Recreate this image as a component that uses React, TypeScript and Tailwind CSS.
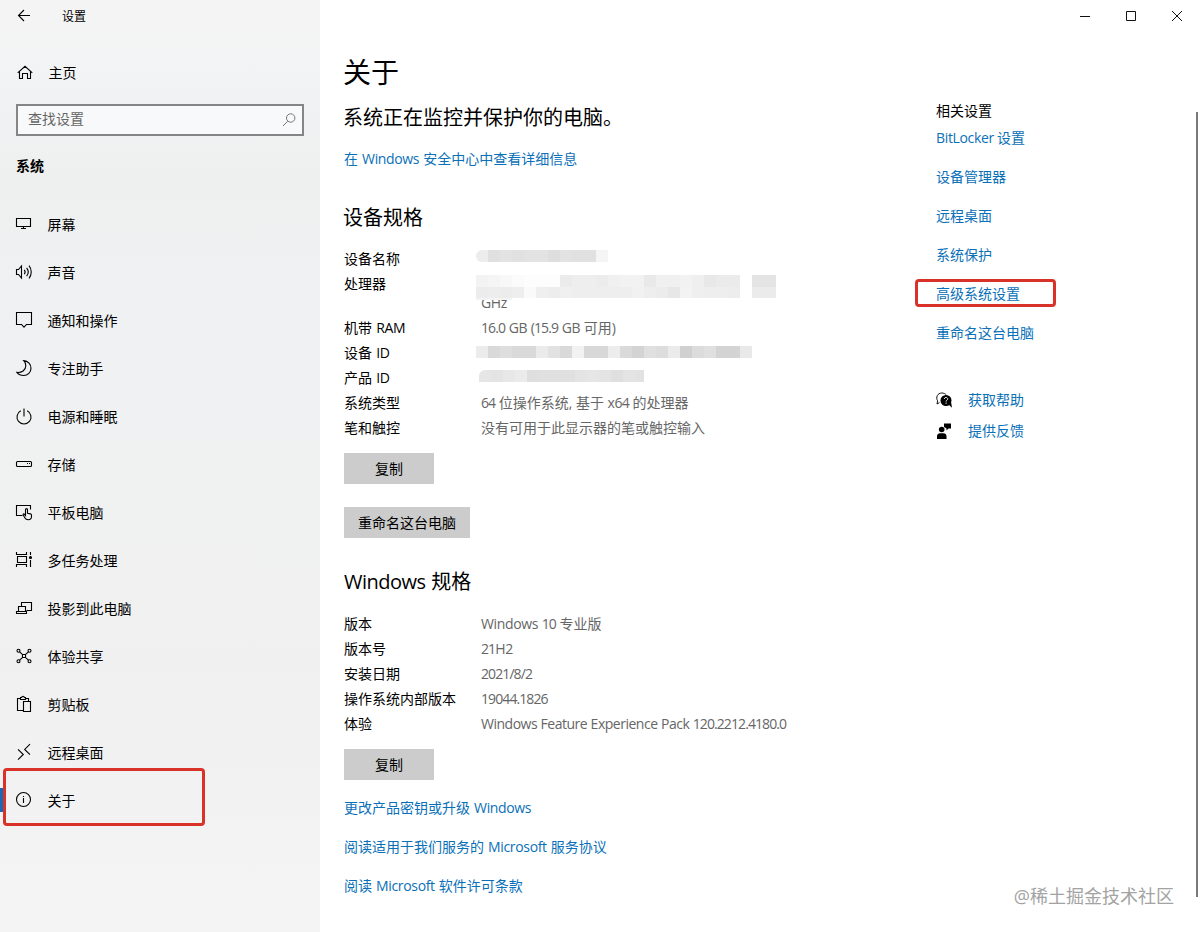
import type { ReactNode } from 'react';

interface NavItem {
  label: string;
  icon: ReactNode;
  active?: boolean;
}

interface Spec {
  label: string;
  value: ReactNode;
}

const NAV_ITEMS: NavItem[] = [
  {
    label: '屏幕',
    icon: <path d="M4.5 6.5h14v8h-14zM11.5 14.5v2M9 16.5h5" />,
  },
  {
    label: '声音',
    icon: (
      <>
        <path d="M4.5 9.5h2l3-3.5v12l-3-3.5h-2z" />
        <path d="M12.3 9.8c1 1.3 1 3.1 0 4.4M14.6 7.8c2 2.5 2 5.9 0 8.4M17 5.7c3 3.7 3 8.9 0 12.6" />
      </>
    ),
  },
  {
    label: '通知和操作',
    icon: <path d="M4.5 4.5h15v12h-5l-2.5 2.7-2.5-2.7h-5z" />,
  },
  {
    label: '专注助手',
    icon: <path d="M11.8 4.6c4.3.4 7.2 3.7 7.2 7.6 0 4-3.2 7.3-7.3 7.3-2.8 0-5.3-1.1-6.8-3.1 4.8.4 8.9-2 8.9-6.6 0-2-.7-3.8-2-5.2z" />,
  },
  {
    label: '电源和睡眠',
    icon: <path d="M12 4.5v8M8.8 6.8a7 7 0 1 0 6.4 0" />,
  },
  {
    label: '存储',
    icon: (
      <>
        <rect x="4.5" y="9.5" width="15" height="5" rx="1" />
        <path d="M15 11.5h1M17 11.5h1" />
      </>
    ),
  },
  {
    label: '平板电脑',
    icon: (
      <>
        <path d="M10.5 15.5h-6v-10h14v4" />
        <path d="M13.5 15.5V9.7c0-1.5 2-1.5 2 0v3.6l3 .6c.7.2 1 .6 1 1.3v1.3c0 2-1.3 3.2-3.3 3.2-1.7 0-2.6-.6-3.4-2l-1.6-2.6c-.5-1 .5-1.6 1.3-.8z" />
      </>
    ),
  },
  {
    label: '多任务处理',
    icon: (
      <>
        <path d="M4.5 4v2.5h10V4M4.5 19v-2.5h10V19M5.5 8.5h9v6h-9z" />
        <path d="M18.5 4v3M18.5 12v7" />
        <circle cx="18.5" cy="9.5" r="1" fill="currentColor" />
      </>
    ),
  },
  {
    label: '投影到此电脑',
    icon: (
      <>
        <path d="M9.5 10V6.5h10v8h-5" />
        <path d="M6.5 15.5v-5h7v5M4.5 15.5h10v2h-10z" />
      </>
    ),
  },
  {
    label: '体验共享',
    icon: (
      <>
        <circle cx="6.5" cy="6.7" r="1.5" />
        <circle cx="17.5" cy="6.7" r="1.5" />
        <circle cx="6.5" cy="17.3" r="1.5" />
        <circle cx="17.5" cy="17.3" r="1.5" />
        <path d="M7.6 7.8l3 2.8M16.4 7.8l-3 2.8M7.6 16.2l3-2.8M16.4 16.2l-3-2.8M10.5 10.5h3v3h-3z" />
      </>
    ),
  },
  {
    label: '剪贴板',
    icon: (
      <>
        <path d="M11.5 18.5h-6v-12h3M13.500 6.500h3v3" />
        <path d="M8.5 7.5v-2h1.200c0-1.700 2.600-1.700 2.600 0h1.200v2z" />
        <path d="M11.5 9.5h7v10h-7z" />
      </>
    ),
  },
  {
    label: '远程桌面',
    icon: <path d="M6 9.3l5.3 5.2L6 19.7M18 4.2l-5.3 5.2 5.3 5.2" />,
  },
  {
    label: '关于',
    active: true,
    icon: (
      <>
        <circle cx="11.5" cy="11.5" r="7" />
        <path d="M11.5 10v5M11.5 8v1" />
      </>
    ),
  },
];

const DEVICE_ID_TILES = [
  'bg-[#ececec]', 'bg-[#d9d9d9]', 'bg-[#dedede]', 'bg-[#dadada]', 'bg-[#dadada]', 'bg-[#ebebeb]',
  'bg-[#e2e2e2]', 'bg-[#d9d9d9]', 'bg-[#f2f2f2]', 'bg-[#d8d8d8]', 'bg-[#d8d8d8]', 'bg-[#ededed]',
  'bg-[#dadada]', 'bg-[#d4d4d4]', 'bg-[#e0e0e0]', 'bg-[#dddddd]', 'bg-[#ebebeb]', 'bg-[#d0d0d0]',
  'bg-[#dcdcdc]', 'bg-[#e0e0e0]', 'bg-[#d4d4d4]', 'bg-[#d4d4d4]', 'bg-[#e9e9e9]',
];

const CPU_TOP_TILES = [
  'bg-[#f3f3f3]', 'bg-[#f5f5f5]', 'bg-[#f8f8f8]', 'bg-[#fbfbfb]', 'bg-[#fdfdfd]', 'bg-[#fdfdfd]', 'bg-[#fdfdfd]',
  'bg-[#ebebeb]', 'bg-[#eeeeee]', 'bg-[#eeeeee]', 'bg-[#ececec]', 'bg-[#f0f0f0]', 'bg-[#f2f2f2]', 'bg-[#f2f2f2]',
  'bg-[#e9e9e9]', 'bg-[#f0f0f0]', 'bg-[#f0f0f0]', 'bg-[#f2f2f2]', 'bg-[#efefef]', 'bg-[#e8e8e8]', 'bg-[#ebebeb]',
  'bg-[#ebebeb]', 'bg-white', 'bg-[#e4e4e4]', 'bg-[#e4e4e4]',
];

const CPU_BOTTOM_TILES = [
  'bg-[#ececec]', 'bg-[#ededed]', 'bg-[#ececec]', 'bg-[#eeeeee]', 'bg-[#fafafa]', 'bg-[#efefef]', 'bg-[#ededed]',
  'bg-[#f0f0f0]', 'bg-[#eeeeee]', 'bg-[#eeeeee]', 'bg-[#eeeeee]', 'bg-[#eeeeee]', 'bg-[#eeeeee]', 'bg-[#f1f1f1]',
  'bg-[#eeeeee]', 'bg-[#ececec]', 'bg-[#e7e7e7]', 'bg-[#f3f3f3]', 'bg-[#efefef]', 'bg-[#eeeeee]', 'bg-[#eeeeee]',
  'bg-[#ededed]', 'bg-white', 'bg-[#ebebeb]', 'bg-[#ebebeb]',
];

const NAME_TILES = [
  'bg-[#ececec]', 'bg-[#e0e0e0]', 'bg-[#e3e3e3]', 'bg-[#e1e1e1]', 'bg-[#e3e3e3]', 'bg-[#e3e3e3]', 'bg-[#dedede]',
  'bg-[#e3e3e3]', 'bg-[#e1e1e1]', 'bg-[#e1e1e1]', 'bg-[#f5f5f5]',
];

const PRODUCT_TILES = [
  'bg-[#e6e6e6]', 'bg-[#e4e4e4]', 'bg-[#e8e8e8]', 'bg-[#ebebeb]', 'bg-[#dfdfdf]', 'bg-[#e0e0e0]', 'bg-[#e0e0e0]',
  'bg-[#e0e0e0]', 'bg-[#e4e4e4]', 'bg-[#e6e6e6]', 'bg-[#e4e4e4]', 'bg-[#dfdfdf]', 'bg-[#e4e4e4]', 'bg-[#e2e2e2]',
];

// Row of 12px blocks covering a private value
function Mosaic({ tiles, className = 'h-3' }: { tiles: string[]; className?: string }) {
  return (
    <div className={`flex overflow-hidden ${className}`}>
      {tiles.map((tile, i) => (
        <div key={i} className={`w-3 shrink-0 ${tile}`} />
      ))}
    </div>
  );
}

// Latin words and numbers are set tighter than the Chinese around them
function Label({ children }: { children: string }) {
  const parts = children.split(/([\d./()]+|[A-Za-z ]+)/).filter(Boolean);
  return (
    <>
      {parts.map((part, i) => {
        if (/^[\d./()]/.test(part)) return <span key={i} className="tracking-[-0.065em]">{part}</span>;
        if (part.length > 20) return <span key={i} className="tracking-[-0.035em]">{part}</span>;
        if (/^[A-Za-z ]/.test(part)) return <span key={i} className="tracking-[-0.025em]">{part}</span>;
        return part;
      })}
    </>
  );
}

const DEVICE_SPECS: Spec[] = [
  { label: '设备名称', value: <Mosaic tiles={NAME_TILES} className="-ml-[5px] mt-px h-3 rounded-l-md" /> },
  {
    label: '处理器',
    value: (
      <>
        <div className="relative z-10 -ml-[5px] h-[19px] pt-px">
          <Mosaic tiles={CPU_TOP_TILES} />
          <Mosaic tiles={CPU_BOTTOM_TILES} className="h-[11px]" />
          <div className="h-[2px] w-9 bg-[#f3f3f3]" />
        </div>
        <div><Label>GHz</Label></div>
      </>
    ),
  },
  { label: '机带 RAM', value: '16.0 GB (15.9 GB 可用)' },
  { label: '设备 ID', value: <Mosaic tiles={DEVICE_ID_TILES} className="-ml-[5px] mt-[3px] h-3" /> },
  { label: '产品 ID', value: <Mosaic tiles={PRODUCT_TILES} className="-ml-[2px] mt-[2px] h-3 w-[165px] rounded-tl-md" /> },
  { label: '系统类型', value: '64 位操作系统, 基于 x64 的处理器' },
  { label: '笔和触控', value: '没有可用于此显示器的笔或触控输入' },
];

const WINDOWS_SPECS: Spec[] = [
  { label: '版本', value: 'Windows 10 专业版' },
  { label: '版本号', value: '21H2' },
  { label: '安装日期', value: '2021/8/2' },
  { label: '操作系统内部版本', value: '19044.1826' },
  { label: '体验', value: 'Windows Feature Experience Pack 120.2212.4180.0' },
];

const RELATED = ['BitLocker 设置', '设备管理器', '远程桌面', '系统保护', '高级系统设置', '重命名这台电脑'];

const FOOTER_LINKS = ['更改产品密钥或升级 Windows', '阅读适用于我们服务的 Microsoft 服务协议', '阅读 Microsoft 软件许可条款'];

function Icon({ children }: { children: ReactNode }) {
  return (
    <svg className="size-6 shrink-0" viewBox="0 0 24 24" fill="none" stroke="currentColor" strokeWidth="1.1">
      {children}
    </svg>
  );
}

function SpecList({ items }: { items: Spec[] }) {
  return (
    <dl className="space-y-1.5 leading-[19px]">
      {items.map((item) => (
        <div key={item.label} className="flex">
          <dt className="w-[137px] shrink-0 [word-spacing:1px]"><Label>{item.label}</Label></dt>
          <dd className="min-h-[19px] whitespace-nowrap text-[#666] [word-spacing:0.3px]">
            {typeof item.value === 'string' ? <Label>{item.value}</Label> : item.value}
          </dd>
        </div>
      ))}
    </dl>
  );
}

function Button({ children, className }: { children: string; className: string }) {
  return <button className={`block h-[31px] bg-[#ccc] ${className}`}>{children}</button>;
}

function Sidebar() {
  return (
    <aside className="w-80 shrink-0 bg-[linear-gradient(180deg,#f4f4f4_0%,#f2f3f4_8%,#eeefef_19%,#f0f1f2_35%,#f0f0f0_72%,#f2f2f2_85%,#f4f4f4_100%)]">
      <div className="flex h-8 items-center pl-3">
        <Icon><path d="M18 11.5H6.5M12 6l-5.5 5.5L12 17" /></Icon>
        <span className="ml-[26px] pt-0.5 text-xs">设置</span>
      </div>
      <div className="mt-4 flex h-12 items-center pl-3">
        <Icon><path d="M5.7 12.8L13 6.3l7.3 6.5M7.5 11.5v7h3v-5h5v5h3v-7" /></Icon>
        <span className="ml-[12.5px] pt-0.5">主页</span>
      </div>
      <div className="mx-4 mt-2 flex h-8 items-center justify-between border-2 border-[#858585] bg-[#f8f9fa] pr-1 pl-2.5 text-[#666]">
        <span className="-mt-0.5">查找设置</span>
        <svg className="size-4" viewBox="0 0 16 16" fill="none" stroke="#777" strokeWidth="1">
          <circle cx="8.7" cy="6" r="4.2" />
          <path d="M5.7 9.2L1 14" />
        </svg>
      </div>
      <h2 className="mt-[18px] pl-4 text-sm leading-6 font-bold">系统</h2>
      <nav className="mt-[22px]">
        {NAV_ITEMS.map((item) => (
          <div key={item.label} className="relative flex h-12 items-center pl-3">
            {item.active && <div className="absolute top-3 left-0 h-6 w-1 bg-[#1668b8]" />}
            <Icon>{item.icon}</Icon>
            <span className="ml-[11.5px] pt-0.5">{item.label}</span>
            {item.active && (
              <div className="absolute -top-2 left-[3px] h-[58px] w-[202px] rounded border-3 border-[#d93229]" />
            )}
          </div>
        ))}
      </nav>
    </aside>
  );
}

function WindowControls() {
  return (
    <div className="flex h-8 justify-end">
      {['M18 16.5h10', 'M18.5 11.5h9v9h-9z', 'M18 11l10 10M28 11l-10 10'].map((d) => (
        <svg key={d} className="h-8 w-[46px]" viewBox="0 0 46 32" fill="none" stroke="#111">
          <path d={d} />
        </svg>
      ))}
    </div>
  );
}

function Related() {
  return (
    <aside className="w-[260px] shrink-0 pt-[69px]">
      <h3 className="leading-5">相关设置</h3>
      <ul className="mt-[7px] space-y-[19px] leading-5 text-[#0a70b8]">
        {RELATED.map((name) => (
          <li key={name} className="relative">
            <Label>{name}</Label>
            {name === '高级系统设置' && (
              <div className="absolute -top-[5px] -left-[21px] h-7 w-[141px] rounded-sm border-3 border-[#d93229]" />
            )}
          </li>
        ))}
      </ul>
      <ul className="mt-[47px] space-y-[11px] leading-5 text-[#0a70b8]">
        <li className="flex items-center gap-4">
          <svg className="size-4" viewBox="0 0 16 16" fill="none">
            <path d="M3.5 10.6L1 12l.6-3.200C-.5 5.500 1.500 1 5.800 1c2 0 3.600.8 4.600 2" stroke="#111" />
            <circle cx="10" cy="8.5" r="5.5" fill="#000" />
            <path d="M12 12l4 3.700-.8-5z" fill="#000" />
            <path d="M8.400 7c0-2.200 3.300-2 3.300-.1 0 1.200-1.600 1.300-1.600 2.700M10.100 10.600v1.200" stroke="#fff" />
          </svg>
          获取帮助
        </li>
        <li className="flex items-center gap-4">
          <svg className="size-4" viewBox="0 0 16 16" fill="#000">
            <circle cx="5.7" cy="6.5" r="2.8" />
            <path d="M1 16v-2.500C1 11.500 2.500 10.300 4 10.300h3.500c1.700 0 3 1.200 3 3.200V16z" />
            <path d="M8 .5h7v5h-2.500L10.500 7.500V5.500L8 4z" />
          </svg>
          提供反馈
        </li>
      </ul>
    </aside>
  );
}

export default function App() {
  return (
    <div className="relative flex h-[932px] w-[1200px] overflow-hidden bg-white font-['Open_Sans','Noto_Sans_CJK_SC',sans-serif] text-sm text-black">
      <Sidebar />
      <div className="flex flex-1 flex-col">
        <WindowControls />
        <div className="flex flex-1">
          <main className="w-[616px] pl-6">
            <h1 className="mt-5 -ml-px text-[28px] leading-10">关于</h1>
            <p className="mt-3 -ml-px text-xl leading-7">系统正在监控并保护你的电脑。</p>
            <p className="mt-[17px] leading-5 text-[#0a70b8] [word-spacing:0.8px]">
              <Label>在 Windows 安全中心中查看详细信息</Label>
            </p>
            <h2 className="mt-[35px] mb-[17px] -ml-px text-xl leading-7">设备规格</h2>
            <SpecList items={DEVICE_SPECS} />
            <Button className="mt-4 w-[90px]">复制</Button>
            <Button className="mt-[23px] w-[126px]">重命名这台电脑</Button>
            <h2 className="mt-[30px] mb-[18px] text-xl leading-7 [word-spacing:1px]"><Label>Windows 规格</Label></h2>
            <SpecList items={WINDOWS_SPECS} />
            <Button className="mt-4 w-[90px]">复制</Button>
            <ul className="mt-[18px] space-y-[19px] leading-5 text-[#0a70b8] [word-spacing:0.8px]">
              {FOOTER_LINKS.map((link) => (
                <li key={link}><Label>{link}</Label></li>
              ))}
            </ul>
          </main>
          <Related />
          <div className="mt-20 h-[785px] w-0.5 bg-[#7a7a7a]" />
        </div>
      </div>
      <div className="absolute right-[26px] bottom-6 text-lg leading-6 text-[#a3a3a3]">@稀土掘金技术社区</div>
    </div>
  );
}
